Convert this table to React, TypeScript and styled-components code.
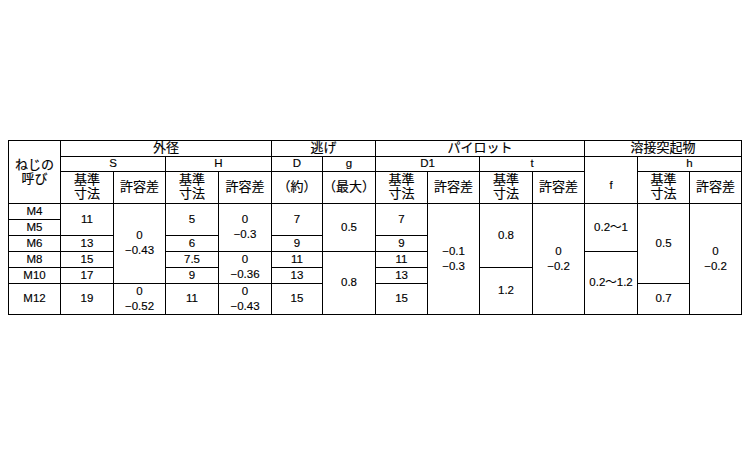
import React from 'react';
import styled, { createGlobalStyle } from 'styled-components';

const GlobalStyle = createGlobalStyle`
  body {
    margin: 0;
    background: #fff;
  }
`;

const Page = styled.div`
  width: 750px;
  height: 450px;
  padding: 140px 0 0 8px;
  box-sizing: border-box;
  background: #fff;
`;

const Table = styled.table`
  width: 733px;
  table-layout: fixed;
  border-collapse: collapse;
  border: 1.5px solid #000;
  color: #000;
  font-family: 'Liberation Sans', 'Noto Sans CJK JP', sans-serif;
  -webkit-text-stroke: 0.15px #000;
`;

const Row = styled.tr<{ $h: number }>`
  height: ${({ $h }) => $h}px;
`;

const Head = styled.th<{ $pt?: number }>`
  border: 1px solid #000;
  padding: ${({ $pt }) => $pt ?? 0}px 0 0;
  font-size: 13px;
  font-weight: normal;
  line-height: 14px;
  text-align: center;
  vertical-align: middle;
  white-space: nowrap;
`;

const Sym = styled(Head)`
  font-size: 11.5px;
  line-height: 13px;
`;

const Cell = styled.td`
  border: 1px solid #000;
  padding: 0;
  font-size: 11.5px;
  line-height: 15px;
  text-align: center;
  vertical-align: middle;
  white-space: nowrap;
`;

const widths = [52, 53, 52, 53, 53, 51, 53, 52, 52, 53, 52, 53, 52, 52];

const Std = () => (
  <Head>
    基準
    <br />
    寸法
  </Head>
);

const Tol = () => <Head>許容差</Head>;

const Two = ({ a, b }: { a: string; b: string }) => (
  <>
    {a}
    <br />
    {b}
  </>
);

export default function App() {
  return (
    <Page>
      <GlobalStyle />
      <Table>
        <colgroup>
          {widths.map((w, i) => (
            <col key={i} style={{ width: w }} />
          ))}
        </colgroup>
        <thead>
          <Row $h={15.5}>
            <Head rowSpan={3}>
              ねじの
              <br />
              呼び
            </Head>
            <Head colSpan={4}>外径</Head>
            <Head colSpan={2}>逃げ</Head>
            <Head colSpan={4}>パイロット</Head>
            <Head colSpan={3}>溶接突起物</Head>
          </Row>
          <Row $h={15}>
            <Sym colSpan={2}>S</Sym>
            <Sym colSpan={2}>H</Sym>
            <Sym>D</Sym>
            <Sym>g</Sym>
            <Sym colSpan={2}>D1</Sym>
            <Sym colSpan={2}>t</Sym>
            <Sym rowSpan={2} $pt={12}>
              f
            </Sym>
            <Sym colSpan={2}>h</Sym>
          </Row>
          <Row $h={32}>
            <Std />
            <Tol />
            <Std />
            <Tol />
            <Head>（約）</Head>
            <Head>（最大）</Head>
            <Std />
            <Tol />
            <Std />
            <Tol />
            <Std />
            <Tol />
          </Row>
        </thead>
        <tbody>
          <Row $h={16}>
            <Cell>M4</Cell>
            <Cell rowSpan={2}>11</Cell>
            <Cell rowSpan={5}>
              <Two a="0" b="−0.43" />
            </Cell>
            <Cell rowSpan={2}>5</Cell>
            <Cell rowSpan={3}>
              <Two a="0" b="−0.3" />
            </Cell>
            <Cell rowSpan={2}>7</Cell>
            <Cell rowSpan={3}>0.5</Cell>
            <Cell rowSpan={2}>7</Cell>
            <Cell rowSpan={6}>
              <Two a="−0.1" b="−0.3" />
            </Cell>
            <Cell rowSpan={4}>0.8</Cell>
            <Cell rowSpan={6}>
              <Two a="0" b="−0.2" />
            </Cell>
            <Cell rowSpan={3}>0.2〜1</Cell>
            <Cell rowSpan={5}>0.5</Cell>
            <Cell rowSpan={6}>
              <Two a="0" b="−0.2" />
            </Cell>
          </Row>
          <Row $h={16}>
            <Cell>M5</Cell>
          </Row>
          <Row $h={16}>
            <Cell>M6</Cell>
            <Cell>13</Cell>
            <Cell>6</Cell>
            <Cell>9</Cell>
            <Cell>9</Cell>
          </Row>
          <Row $h={16}>
            <Cell>M8</Cell>
            <Cell>15</Cell>
            <Cell>7.5</Cell>
            <Cell rowSpan={2}>
              <Two a="0" b="−0.36" />
            </Cell>
            <Cell>11</Cell>
            <Cell rowSpan={3}>0.8</Cell>
            <Cell>11</Cell>
            <Cell rowSpan={3}>0.2〜1.2</Cell>
          </Row>
          <Row $h={16}>
            <Cell>M10</Cell>
            <Cell>17</Cell>
            <Cell>9</Cell>
            <Cell>13</Cell>
            <Cell>13</Cell>
            <Cell rowSpan={2}>1.2</Cell>
          </Row>
          <Row $h={31}>
            <Cell>M12</Cell>
            <Cell>19</Cell>
            <Cell>
              <Two a="0" b="−0.52" />
            </Cell>
            <Cell>11</Cell>
            <Cell>
              <Two a="0" b="−0.43" />
            </Cell>
            <Cell>15</Cell>
            <Cell>15</Cell>
            <Cell>0.7</Cell>
          </Row>
        </tbody>
      </Table>
    </Page>
  );
}
